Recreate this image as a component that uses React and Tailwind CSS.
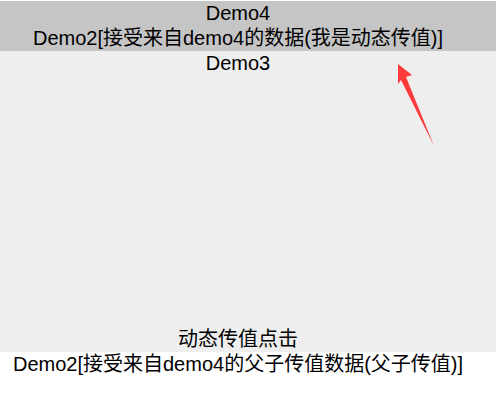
import React, { useState } from "react";

const Demo2 = ({ msg }) => (
  <div className="h-[25px] leading-[25px]">Demo2[接受来自demo4的{msg}]</div>
);

const Demo3 = ({ onClick }) => (
  <div className="h-[301px] bg-[#eeeeee] flex flex-col pr-[20px]">
    <div className="h-[25px] leading-[25px]">Demo3</div>
    <div className="flex-1"></div>
    <div className="h-[25px] leading-[25px] cursor-pointer" onClick={onClick}>
      动态传值点击
    </div>
  </div>
);

export default function App() {
  const [dyn, setDyn] = useState("数据(我是动态传值)");

  return (
    <div
      className="relative w-[496px] h-[400px] bg-white text-black text-[20px] text-center pt-px"
      style={{ fontFamily: '"Liberation Sans", Arial, "Noto Sans CJK SC", sans-serif' }}
    >
      {/* Demo4 header */}
      <div className="bg-[#c5c5c5] pr-[20px]">
        <div className="h-[25px] leading-[25px]">Demo4</div>
        <Demo2 msg={dyn} />
      </div>

      <Demo3 onClick={() => setDyn("数据(我是动态传值)")} />

      <div className="pr-[20px]">
        <Demo2 msg="父子传值数据(父子传值)" />
      </div>

      {/* annotation arrow */}
      <svg
        className="absolute left-0 top-0 pointer-events-none"
        width="496"
        height="400"
        viewBox="0 0 496 400"
      >
        <polygon
          points="398,64 412,75 406,77 434,146 401,80 398,84"
          fill="#ff3a3a"
        />
      </svg>
    </div>
  );
}
